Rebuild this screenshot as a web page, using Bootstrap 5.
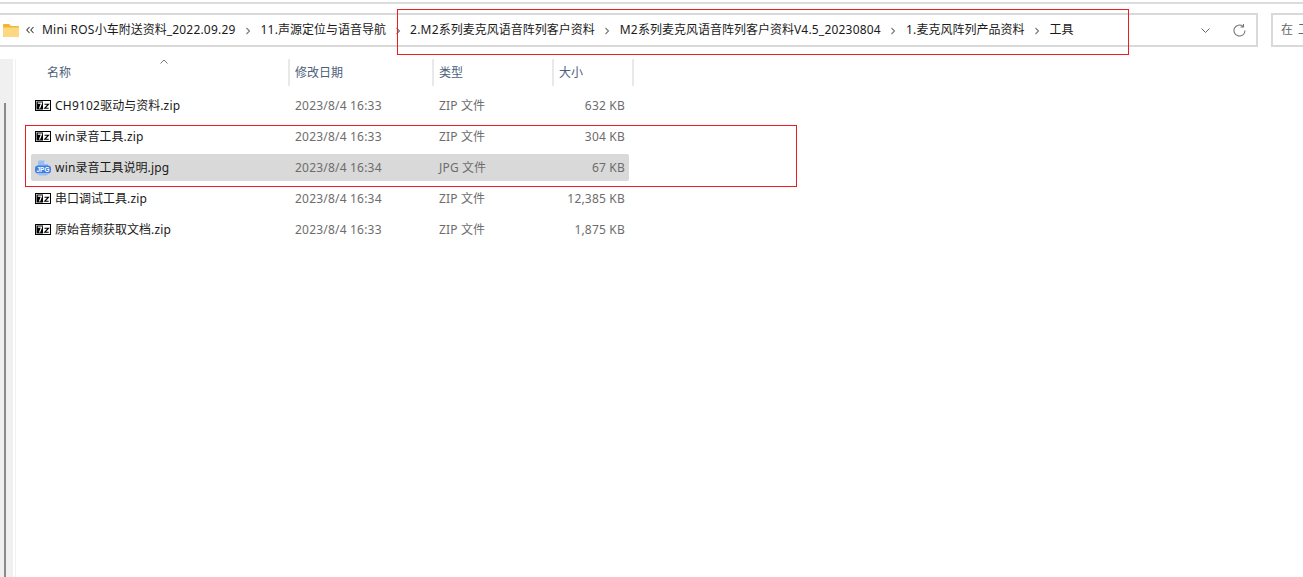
<!DOCTYPE html>
<html lang="zh">
<head>
<meta charset="utf-8">
<title>工具</title>
<link href="https://cdn.jsdelivr.net/npm/bootstrap@5.3.0/dist/css/bootstrap.min.css" rel="stylesheet">
<style>
html,body{height:100%;overflow:hidden}
body{background:#fff;font:12px/16px "Noto Sans","Noto Sans CJK SC",sans-serif;color:#1a1a1a;position:relative}
.lt{letter-spacing:.2px}
.top-rule{margin-top:2px;border-top:2px solid #dcdcdc}
.toolbar{height:34px;margin-top:9px;gap:13px}
.addr{flex:0 0 1258px;border:1px solid #d9d9d9;border-width:2px 2px 2px 0;height:34px;padding-left:3px}
.crumb-name{white-space:nowrap;color:#1a1a1a}
.sep{width:25px;text-align:center;flex:none;line-height:1}
.sep-narrow{width:24px}
.search-box{flex:1;height:34px;border:2px solid #d9d9d9;border-right:0;padding-left:8px;color:#666;white-space:nowrap;overflow:hidden;letter-spacing:1px}
.body-pane{height:518px;margin-top:12px}
.side{flex:0 0 13px;background:#f0f0f0;position:relative}
.side-gap{flex:0 0 3px;border-right:1px solid #f2f2f2}
.scroll-thumb{position:absolute;left:4px;top:44px;bottom:0;width:2px;background:#8a8a8a}
.files{padding-left:15px;flex:1;min-width:0}
.head-row{height:27px;position:relative;color:#4c607a}
.c-name{flex:0 0 257px}
.c-date{flex:0 0 144px;padding-left:7px}
.c-type{flex:0 0 120px;padding-left:7px}
.c-size{flex:0 0 77px;padding-right:4px;text-align:right}
.head-row>div{height:27px;line-height:27px;border-right:2px solid #e9e9e9}
.head-row .c-name{flex-basis:259px;padding-left:16px}
.head-row .c-date{padding-left:5px}
.head-row .c-type{padding-left:5px}
.head-row .c-size{flex:0 0 80px;text-align:left;padding:0 0 0 5px}
.caret-up{position:absolute;left:129px;top:0}
.file-list{margin-top:6px;gap:4px}
.file-row{height:27px;width:598px;border-radius:2px;color:#6d6d6d}
.file-row.is-sel{background:#d9d9d9}
.file-row .c-name{padding-left:4px;color:#1a1a1a;gap:4px;white-space:nowrap}
.file-row .c-date,.file-row .c-type{white-space:nowrap}
.annot{position:absolute;border:1px solid #ec1c24;pointer-events:none}
.annot-a{left:397px;top:9px;width:732px;height:46px}
.annot-b{left:25px;top:125px;width:772px;height:62px}
</style>
</head>
<body>
<svg width="0" height="0" class="position-absolute"><defs>
  <symbol id="ico7z" viewBox="0 0 16 11"><rect x=".5" y=".5" width="15" height="10" fill="#fff" stroke="#000"/><rect x="1.500" y="1.500" width="6.500" height="8" fill="#000"/><path d="M2.800 3.200h3.800L4.500 8.500" stroke="#fff" stroke-width="1.200" fill="none"/><path d="M9.500 4.200h4L9.700 8.300h4" stroke="#000" fill="none" stroke-width="1.100"/></symbol>
  <symbol id="icoSep" viewBox="0 0 6 8"><path d="m1.500 1 3 3-3 3" fill="none" stroke="#777" stroke-width="1.100"/></symbol>
</defs></svg>
<div class="top-rule"></div>
<div class="toolbar d-flex">
  <div class="addr d-flex align-items-center">
    <svg width="16" height="13" viewBox="0 0 16 13"><path d="M0 1a1 1 0 0 1 1-1h5l2 2h7a1 1 0 0 1 1 1v9a1 1 0 0 1-1 1H1a1 1 0 0 1-1-1z" fill="#f2b632"/><path d="M0 3.500h16V12a1 1 0 0 1-1 1H1a1 1 0 0 1-1-1z" fill="#fcd980"/></svg>
    <svg style="margin-left:7px" width="8" height="8" viewBox="0 0 8 8" fill="none" stroke="#444" stroke-width="1.100"><path d="M3.500 1 .8 4l2.700 3M7.500 1 4.800 4l2.700 3"/></svg>
    <span class="crumb-name" style="margin-left:8px"><span class="lt">Mini ROS</span>小车附送资料<span class="lt">_2022.09.29</span></span>
    <span class="sep"><svg width="6" height="8"><use href="#icoSep"/></svg></span>
    <span class="crumb-name"><span class="lt">11.</span>声源定位与语音导航</span>
    <span class="sep sep-narrow"><svg width="6" height="8"><use href="#icoSep"/></svg></span>
    <span class="crumb-name"><span class="lt">2.M2</span>系列麦克风语音阵列客户资料</span>
    <span class="sep"><svg width="6" height="8"><use href="#icoSep"/></svg></span>
    <span class="crumb-name"><span class="lt">M2</span>系列麦克风语音阵列客户资料<span class="lt">V4.5_20230804</span></span>
    <span class="sep"><svg width="6" height="8"><use href="#icoSep"/></svg></span>
    <span class="crumb-name"><span class="lt">1.</span>麦克风阵列产品资料</span>
    <span class="sep"><svg width="6" height="8"><use href="#icoSep"/></svg></span>
    <span class="crumb-name">工具</span>
    <svg class="ms-auto" width="9" height="5" viewBox="0 0 9 5" fill="none" stroke="#666"><path d="m.5.500 4 4 4-4"/></svg>
    <svg style="margin-left:23px;margin-right:10px" width="13" height="13" viewBox="0 0 13 13" fill="none" stroke="#777" stroke-width="1.100"><path d="M12 6.500A5.500 5.500 0 1 1 10 2.300M10.500 0v3h-3"/></svg>
  </div>
  <div class="search-box d-flex align-items-center">在 工</div>
</div>
<div class="body-pane d-flex">
  <div class="side"><div class="scroll-thumb"></div></div>
  <div class="side-gap"></div>
  <div class="files">
    <div class="head-row d-flex">
      <svg class="caret-up" width="8" height="5" viewBox="0 0 8 5" fill="none" stroke="#777"><path d="m.5 4.500 3.500-3.500 3.500 3.500"/></svg>
      <div class="c-name">名称</div><div class="c-date">修改日期</div><div class="c-type">类型</div><div class="c-size">大小</div>
    </div>
    <div class="file-list d-flex flex-column">
      <div class="file-row d-flex align-items-center"><div class="c-name d-flex align-items-center"><svg width="16" height="11"><use href="#ico7z"/></svg><span><span class="lt">CH9102</span>驱动与资料<span class="lt">.zip</span></span></div><div class="c-date lt">2023/8/4 16:33</div><div class="c-type"><span class="lt">ZIP</span> 文件</div><div class="c-size lt">632 KB</div></div>
      <div class="file-row d-flex align-items-center"><div class="c-name d-flex align-items-center"><svg width="16" height="11"><use href="#ico7z"/></svg><span><span class="lt">win</span>录音工具<span class="lt">.zip</span></span></div><div class="c-date lt">2023/8/4 16:33</div><div class="c-type"><span class="lt">ZIP</span> 文件</div><div class="c-size lt">304 KB</div></div>
      <div class="file-row is-sel d-flex align-items-center"><div class="c-name d-flex align-items-center"><svg width="16" height="16" viewBox="0 0 16 16"><path d="M3 1.500a1 1 0 0 1 1-1h5.500L13 4v3H3z" fill="#9dbdf0"/><path d="M9.500.5V4H13z" fill="#d6e3f8"/><rect y="5.500" width="16" height="8" rx="3" fill="#3f7fe0"/><path d="M3 13h10a2 2 0 0 1-2 2.500H5A2 2 0 0 1 3 13z" fill="#9dbdf0"/><text x="8" y="12" font-size="7" font-family="Liberation Sans" font-weight="700" text-anchor="middle" textLength="13" lengthAdjust="spacingAndGlyphs" fill="#fff">JPG</text></svg><span><span class="lt">win</span>录音工具说明<span class="lt">.jpg</span></span></div><div class="c-date lt">2023/8/4 16:34</div><div class="c-type"><span class="lt">JPG</span> 文件</div><div class="c-size lt">67 KB</div></div>
      <div class="file-row d-flex align-items-center"><div class="c-name d-flex align-items-center"><svg width="16" height="11"><use href="#ico7z"/></svg><span>串口调试工具<span class="lt">.zip</span></span></div><div class="c-date lt">2023/8/4 16:34</div><div class="c-type"><span class="lt">ZIP</span> 文件</div><div class="c-size lt">12,385 KB</div></div>
      <div class="file-row d-flex align-items-center"><div class="c-name d-flex align-items-center"><svg width="16" height="11"><use href="#ico7z"/></svg><span>原始音频获取文档<span class="lt">.zip</span></span></div><div class="c-date lt">2023/8/4 16:33</div><div class="c-type"><span class="lt">ZIP</span> 文件</div><div class="c-size lt">1,875 KB</div></div>
    </div>
  </div>
</div>
<div class="annot annot-a"></div>
<div class="annot annot-b"></div>
<script src="https://cdn.jsdelivr.net/npm/bootstrap@5.3.0/dist/js/bootstrap.bundle.min.js"></script>
</body>
</html>
